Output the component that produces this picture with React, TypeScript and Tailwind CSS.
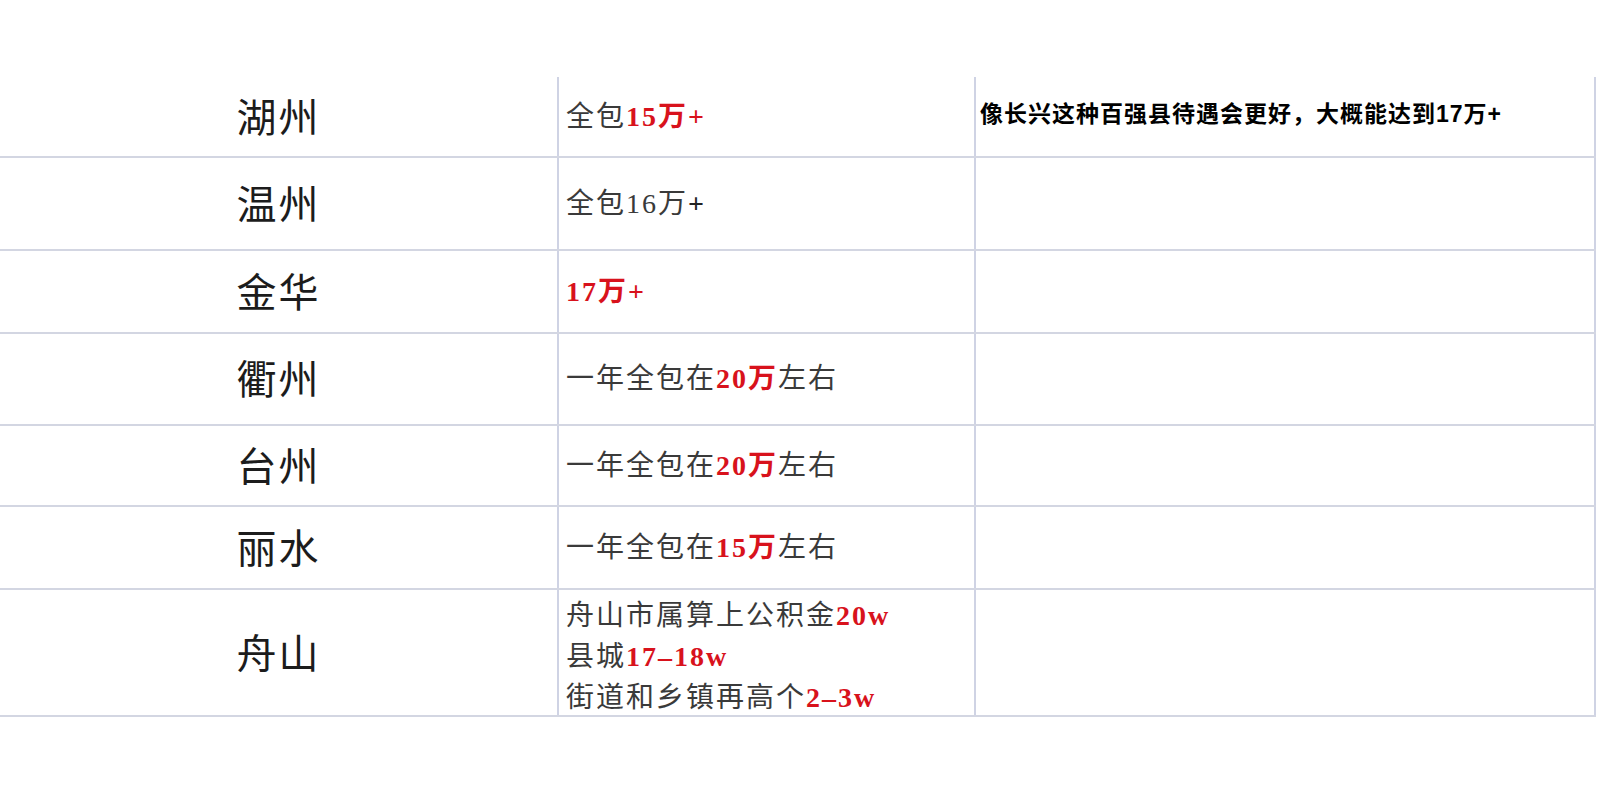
import type { ReactNode } from 'react';

type Row = {
  city: string;
  pay: ReactNode;
  note?: string;
  h: string;
};

const Red = ({ children }: { children: ReactNode }) => (
  <span className="text-[#d8121c] font-bold">{children}</span>
);

const ROWS: Row[] = [
  {
    city: '湖州',
    pay: <>全包<Red>15万+</Red></>,
    note: '像长兴这种百强县待遇会更好，大概能达到17万+',
    h: 'h-[81px]',
  },
  { city: '温州', pay: <>全包16万<span className="font-bold text-[#222]">+</span></>, h: 'h-[93px]' },
  { city: '金华', pay: <Red>17万+</Red>, h: 'h-[83px]' },
  { city: '衢州', pay: <>一年全包在<Red>20万</Red>左右</>, h: 'h-[92px]' },
  { city: '台州', pay: <>一年全包在<Red>20万</Red>左右</>, h: 'h-[81px]' },
  { city: '丽水', pay: <>一年全包在<Red>15万</Red>左右</>, h: 'h-[83px]' },
  {
    city: '舟山',
    pay: (
      <div className="flex flex-col leading-[41px] pt-2">
        <span>舟山市属算上公积金<Red>20w</Red></span>
        <span>县城<Red>17–18w</Red></span>
        <span>街道和乡镇再高个<Red>2–3w</Red></span>
      </div>
    ),
    h: 'h-[127px]',
  },
];

export default function App() {
  return (
    <div className="w-[1600px] h-[800px] bg-white pt-[77px] overflow-hidden">
      <div className="w-[1596px]">
        {ROWS.map(r => (
          <div key={r.city} className={`flex border-b-2 border-[#d3d6e2] ${r.h}`}>
            {/* City */}
            <div className="w-[557px] shrink-0 flex items-center justify-center pt-1 text-[40px] text-[#1c1c1c] font-['Liberation_Serif','Noto_Sans_CJK_SC',serif] tracking-[2px]">
              {r.city}
            </div>
            {/* Pay */}
            <div className="w-[417px] shrink-0 flex items-center pl-[7px] border-l-2 border-[#cfd3e4] text-[28px] text-[#3a3a3a] tracking-[2px] font-['Liberation_Serif','Noto_Sans_CJK_SC',serif]">
              {r.pay}
            </div>
            {/* Note */}
            <div className="flex-1 flex items-center pl-[4px] pb-1 border-l-2 border-r-2 border-[#cfd3e4] text-[23px] font-bold text-black tracking-[1px] font-['Liberation_Sans','Noto_Sans_CJK_SC',sans-serif]">
              {r.note}
            </div>
          </div>
        ))}
      </div>
    </div>
  );
}
